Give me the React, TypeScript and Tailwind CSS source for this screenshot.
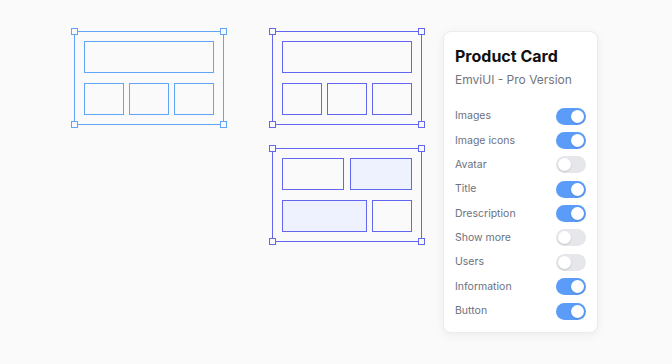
import React from "react";

const toggles: { label: string; on: boolean }[] = [
  { label: "Images", on: true },
  { label: "Image icons", on: true },
  { label: "Avatar", on: false },
  { label: "Title", on: true },
  { label: "Drescription", on: true },
  { label: "Show more", on: false },
  { label: "Users", on: false },
  { label: "Information", on: true },
  { label: "Button", on: true },
];

function Handles({ color }: { color: string }) {
  const base = `absolute w-[7px] h-[7px] border bg-[#fafafa] ${color}`;
  return (
    <>
      <span className={`${base} -left-[4px] -top-[4px]`} />
      <span className={`${base} -right-[4px] -top-[4px]`} />
      <span className={`${base} -left-[4px] -bottom-[4px]`} />
      <span className={`${base} -right-[4px] -bottom-[4px]`} />
    </>
  );
}

function Frame({
  color,
  children,
}: {
  color: string;
  children: React.ReactNode;
}) {
  return (
    <div className={`relative w-[150px] h-[94px] border p-[9px] flex flex-col gap-[10px] ${color}`}>
      <Handles color={color} />
      {children}
    </div>
  );
}

function Toggle({ on }: { on: boolean }) {
  return (
    <div
      className={`relative w-[30px] h-[17px] rounded-full ${
        on ? "bg-[#5a9cf8]" : "bg-[#e6e7ea]"
      }`}
    >
      <span
        className={`absolute top-[2px] w-[13px] h-[13px] rounded-full bg-white shadow-[0_1px_2px_rgba(0,0,0,0.15)] ${
          on ? "right-[2px]" : "left-[2px]"
        }`}
      />
    </div>
  );
}

export default function App() {
  return (
    <div
      className="w-[672px] h-[364px] bg-[#fafafa] flex items-start pt-[31px] pl-[74px]"
      style={{ fontFamily: "Inter, 'Noto Sans', sans-serif" }}
    >
      {/* first frame: blue selection */}
      <Frame color="border-[#60a5fa]">
        <div className="h-[32px] border border-[#60a5fa]" />
        <div className="flex gap-[5px] h-[32px]">
          <div className="flex-1 border border-[#60a5fa]" />
          <div className="flex-1 border border-[#60a5fa]" />
          <div className="flex-1 border border-[#60a5fa]" />
        </div>
      </Frame>

      {/* second column: indigo frames */}
      <div className="ml-[48px] flex flex-col gap-[23px]">
        <Frame color="border-[#6366f1]">
          <div className="h-[32px] border border-[#6366f1]" />
          <div className="flex gap-[5px] h-[32px]">
            <div className="flex-1 border border-[#6366f1]" />
            <div className="flex-1 border border-[#6366f1]" />
            <div className="flex-1 border border-[#6366f1]" />
          </div>
        </Frame>
        <Frame color="border-[#6366f1]">
          <div className="flex gap-[6px] h-[32px]">
            <div className="w-[62px] border border-[#6366f1]" />
            <div className="flex-1 border border-[#6366f1] bg-[#eef2ff]" />
          </div>
          <div className="flex gap-[5px] h-[32px]">
            <div className="w-[85px] border border-[#6366f1] bg-[#eef2ff]" />
            <div className="flex-1 border border-[#6366f1]" />
          </div>
        </Frame>
      </div>

      {/* settings card */}
      <div className="ml-[21px] w-[155px] bg-white border border-[#ececec] rounded-lg shadow-[0_2px_10px_rgba(0,0,0,0.06)] pt-[14px] pb-[12px] pl-[11px] pr-[11px]">
        <h2 className="text-[16px] leading-[20px] font-bold text-[#111111]">
          Product Card
        </h2>
        <p className="mt-[6px] text-[12px] leading-[16px] text-[#71757d]">
          EmviUI - Pro Version
        </p>
        <div className="mt-[19.5px] flex flex-col gap-[7.375px]">
          {toggles.map((t) => (
            <div key={t.label} className="flex items-center justify-between h-[17px]">
              <span className="text-[10.5px] text-[#6b7280]">{t.label}</span>
              <Toggle on={t.on} />
            </div>
          ))}
        </div>
      </div>
    </div>
  );
}
